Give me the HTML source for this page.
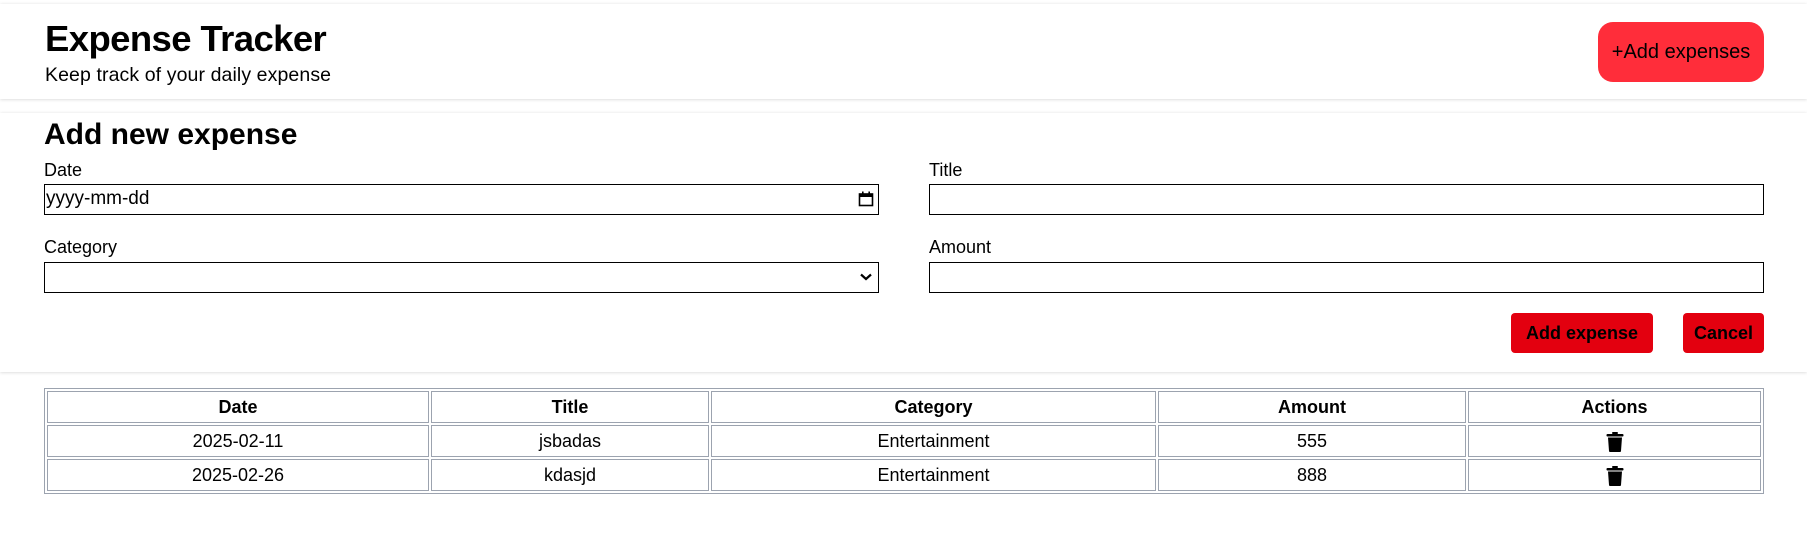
<!DOCTYPE html>
<html><head><meta charset="utf-8"><style>
*{box-sizing:border-box;margin:0;padding:0}
body{width:1807px;height:544px;background:#fff;font-family:"Liberation Sans",sans-serif;color:#000;position:relative;overflow:hidden}
.a{position:absolute;white-space:nowrap}
.hdr{position:absolute;left:0;top:4px;width:1807px;height:95px;background:#fff;box-shadow:0 1px 3px rgba(0,0,0,.12),0 -1px 3px rgba(0,0,0,.04)}
.sec{position:absolute;left:0;top:113px;width:1807px;height:259px;background:#fff;box-shadow:0 1px 3px rgba(0,0,0,.12),0 -1px 3px rgba(0,0,0,.04)}
.box{position:absolute;border:1.5px solid #000;background:#fff}
.btn{position:absolute;background:#e3000f;border-radius:4px;font-weight:bold;font-size:18px;display:flex;align-items:center;justify-content:center}
table{position:absolute;left:44px;top:388px;width:1720px;border:1px solid #9ca3af;border-spacing:2px;border-collapse:separate}
td,th{border:1px solid #9ca3af;height:32px;text-align:center;font-size:18px;padding:0}
th{font-weight:bold}
</style></head><body>
<div class="hdr"></div>
<div class="a" style="left:45px;top:18px;font-size:36.5px;font-weight:bold;letter-spacing:-0.6px">Expense Tracker</div>
<div class="a" style="left:45px;top:64px;font-size:19.5px;letter-spacing:0.1px">Keep track of your daily expense</div>
<div class="a" style="left:1598px;top:22px;width:166px;height:60px;background:#ff2d3a;border-radius:15px;display:flex;align-items:center;justify-content:center;font-size:20px">+Add expenses</div>

<div class="sec"></div>
<div class="a" style="left:44px;top:118px;font-size:30px;font-weight:bold">Add new expense</div>
<div class="a" style="left:44px;top:160px;font-size:18px">Date</div>
<div class="box" style="left:44px;top:184px;width:835px;height:31px"></div>
<div class="a" style="left:46px;top:188px;font-size:19px">yyyy-mm-dd</div>
<svg class="a" style="left:858px;top:191px" width="16" height="16" viewBox="0 0 16 16"><rect x="1.5" y="3" width="13" height="11.5" fill="none" stroke="#000" stroke-width="1.6"/><rect x="1.5" y="3" width="13" height="3" fill="#000"/><rect x="4" y="0.5" width="1.6" height="3" fill="#000"/><rect x="10.4" y="0.5" width="1.6" height="3" fill="#000"/></svg>
<div class="a" style="left:929px;top:160px;font-size:18px">Title</div>
<div class="box" style="left:929px;top:184px;width:835px;height:31px"></div>
<div class="a" style="left:44px;top:237px;font-size:18px">Category</div>
<div class="box" style="left:44px;top:262px;width:835px;height:31px"></div>
<svg class="a" style="left:860px;top:273px" width="12" height="8" viewBox="0 0 12 8"><path d="M1 1.5 L6 6 L11 1.5" fill="none" stroke="#000" stroke-width="2.2"/></svg>
<div class="a" style="left:929px;top:237px;font-size:18px">Amount</div>
<div class="box" style="left:929px;top:262px;width:835px;height:31px"></div>
<div class="btn" style="left:1511px;top:313px;width:142px;height:40px">Add expense</div>
<div class="btn" style="left:1683px;top:313px;width:81px;height:40px">Cancel</div>

<table>
<colgroup><col style="width:382px"><col style="width:278px"><col style="width:445px"><col style="width:308px"><col></colgroup>
<tr><th>Date</th><th>Title</th><th>Category</th><th>Amount</th><th>Actions</th></tr>
<tr><td>2025-02-11</td><td>jsbadas</td><td>Entertainment</td><td>555</td><td><svg width="18" height="20" viewBox="0 0 18 20" style="vertical-align:middle"><rect x="6" y="0" width="6" height="2" rx="1"/><rect x="0.5" y="2" width="17" height="2.5" rx="1"/><path d="M2 5.5 H16 L15 19 Q15 20 14 20 H4 Q3 20 3 19 Z"/></svg></td></tr>
<tr><td>2025-02-26</td><td>kdasjd</td><td>Entertainment</td><td>888</td><td><svg width="18" height="20" viewBox="0 0 18 20" style="vertical-align:middle"><rect x="6" y="0" width="6" height="2" rx="1"/><rect x="0.5" y="2" width="17" height="2.5" rx="1"/><path d="M2 5.5 H16 L15 19 Q15 20 14 20 H4 Q3 20 3 19 Z"/></svg></td></tr>
</table>
</body></html>
